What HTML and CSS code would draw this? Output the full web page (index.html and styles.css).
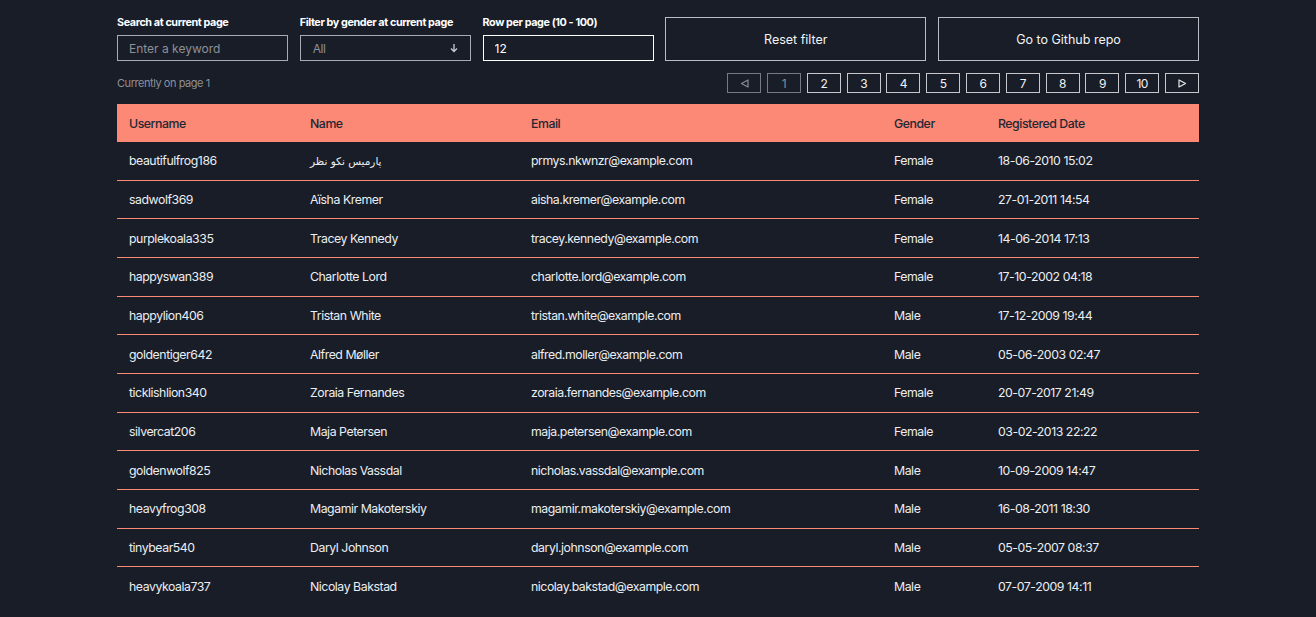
FILE: index.html
```html
<!DOCTYPE html>
<html lang="en">
<head>
<meta charset="utf-8">
<title>User table</title>
<link rel="stylesheet" href="styles.css">
</head>
<body>
<main class="page">
  <section class="controls">
    <label class="field">
      <span class="field-label">Search at current page</span>
      <input class="box" type="text" placeholder="Enter a keyword">
    </label>
    <label class="field">
      <span class="field-label">Filter by gender at current page</span>
      <span class="box select">
        <span class="select-value">All</span>
        <svg class="select-arrow" width="8" height="10" viewBox="0 0 8 10"><path d="M4 1v7.5M1 5.5l3 3 3-3" fill="none" stroke="#c9cbd1" stroke-width="1.3"/></svg>
      </span>
    </label>
    <label class="field">
      <span class="field-label">Row per page (10 - 100)</span>
      <input class="box box-active" type="text" value="12">
    </label>
    <button class="btn">Reset filter</button>
    <button class="btn">Go to Github repo</button>
  </section>

  <section class="pager-row">
    <span class="page-info">Currently on page 1</span>
    <nav class="pager">
      <span class="pg pg-off"><svg width="9" height="9" viewBox="0 0 9 9"><path d="M8 1v7L1.5 4.5z" fill="none" stroke="#8a8d95" stroke-width="1.2" stroke-linejoin="round"/></svg></span>
      <span class="pg pg-off">1</span>
      <span class="pg">2</span>
      <span class="pg">3</span>
      <span class="pg">4</span>
      <span class="pg">5</span>
      <span class="pg">6</span>
      <span class="pg">7</span>
      <span class="pg">8</span>
      <span class="pg">9</span>
      <span class="pg">10</span>
      <span class="pg"><svg width="9" height="9" viewBox="0 0 9 9"><path d="M1 1v7l6.5-3.5z" fill="none" stroke="#e6e7ea" stroke-width="1.2" stroke-linejoin="round"/></svg></span>
    </nav>
  </section>

  <table class="users">
    <colgroup>
      <col class="c1"><col class="c2"><col class="c3"><col class="c4"><col class="c5">
    </colgroup>
    <thead>
      <tr><th>Username</th><th>Name</th><th>Email</th><th>Gender</th><th>Registered Date</th></tr>
    </thead>
    <tbody>
      <tr><td>beautifulfrog186</td><td class="rtl"><span dir="rtl">پارمیس نکو نظر</span></td><td>prmys.nkwnzr@example.com</td><td>Female</td><td>18-06-2010 15:02</td></tr>
      <tr><td>sadwolf369</td><td>Aïsha Kremer</td><td>aisha.kremer@example.com</td><td>Female</td><td>27-01-2011 14:54</td></tr>
      <tr><td>purplekoala335</td><td>Tracey Kennedy</td><td>tracey.kennedy@example.com</td><td>Female</td><td>14-06-2014 17:13</td></tr>
      <tr><td>happyswan389</td><td>Charlotte Lord</td><td>charlotte.lord@example.com</td><td>Female</td><td>17-10-2002 04:18</td></tr>
      <tr><td>happylion406</td><td>Tristan White</td><td>tristan.white@example.com</td><td>Male</td><td>17-12-2009 19:44</td></tr>
      <tr><td>goldentiger642</td><td>Alfred Møller</td><td>alfred.moller@example.com</td><td>Male</td><td>05-06-2003 02:47</td></tr>
      <tr><td>ticklishlion340</td><td>Zoraia Fernandes</td><td>zoraia.fernandes@example.com</td><td>Female</td><td>20-07-2017 21:49</td></tr>
      <tr><td>silvercat206</td><td>Maja Petersen</td><td>maja.petersen@example.com</td><td>Female</td><td>03-02-2013 22:22</td></tr>
      <tr><td>goldenwolf825</td><td>Nicholas Vassdal</td><td>nicholas.vassdal@example.com</td><td>Male</td><td>10-09-2009 14:47</td></tr>
      <tr><td>heavyfrog308</td><td>Magamir Makoterskiy</td><td>magamir.makoterskiy@example.com</td><td>Male</td><td>16-08-2011 18:30</td></tr>
      <tr><td>tinybear540</td><td>Daryl Johnson</td><td>daryl.johnson@example.com</td><td>Male</td><td>05-05-2007 08:37</td></tr>
      <tr><td>heavykoala737</td><td>Nicolay Bakstad</td><td>nicolay.bakstad@example.com</td><td>Male</td><td>07-07-2009 14:11</td></tr>
    </tbody>
  </table>
</main>
</body>
</html>
```

FILE: styles.css
```css
* { box-sizing: border-box; }

html, body {
  margin: 0;
  padding: 0;
  background: #181d27;
  color: #eceef2;
  font-family: Inter, "Noto Sans", "DejaVu Sans", sans-serif;
  font-size: 12.3px;
  letter-spacing: -0.45px;
}

.page {
  width: 1082px;
  margin: 0 auto;
  padding-top: 16px;
}

.controls {
  display: flex;
  gap: 11.75px;
  align-items: flex-end;
}

.field {
  width: 171px;
  flex: none;
  display: flex;
  flex-direction: column;
  gap: 5px;
}

.field-label {
  font-size: 10.8px;
  font-weight: 700;
  line-height: 14px;
  color: #ffffff;
  white-space: nowrap;
  letter-spacing: -0.4px;
}

.box {
  height: 26px;
  width: 100%;
  border: 1px solid #a8abb2;
  background: #181d27;
  color: #ffffff;
  font: inherit;
  font-size: 12px;
  padding: 0 11px;
  outline: none;
  margin: 0;
  border-radius: 0;
}

.box::placeholder { color: #8d9098; }

.box-active { border-color: #ffffff; }

.select {
  display: flex;
  align-items: center;
  justify-content: space-between;
  padding: 0 12px;
}

.select-value { color: #8d9098; }

.select-arrow { display: block; }

.btn {
  flex: 1 1 0;
  height: 44px;
  border: 1px solid #b9bcc2;
  background: #181d27;
  color: #f2f3f5;
  font: inherit;
  font-size: 12.5px;
  cursor: pointer;
  border-radius: 0;
}

.pager-row {
  display: flex;
  justify-content: space-between;
  align-items: center;
  margin-top: 12px;
  height: 20px;
}

.page-info {
  font-size: 11px;
  color: #8d9098;
}

.pager {
  display: flex;
  gap: 5.8px;
}

.pg {
  width: 34px;
  height: 20px;
  border: 1px solid #c6c8cd;
  display: flex;
  align-items: center;
  justify-content: center;
  font-size: 12px;
  color: #f2f3f5;
}

.pg-off {
  border-color: #777a82;
  color: #8a8d95;
}

.users {
  width: 100%;
  margin-top: 11px;
  border-collapse: separate;
  border-spacing: 0;
  table-layout: fixed;
}

.c1 { width: 181px; }
.c2 { width: 221px; }
.c3 { width: 363px; }
.c4 { width: 104px; }
.c5 { width: 213px; }

.users th {
  background: #fc8876;
  color: #232733;
  font-weight: 500;
  text-align: left;
  height: 38px;
  padding: 0 12px;
}

.users td {
  height: 38.67px;
  padding: 0 12px;
  text-align: left;
  white-space: nowrap;
  color: #eceef2;
  border-bottom: 1px solid #fc8876;
}

.users tbody tr:last-child td { border-bottom: none; }

.users td.rtl span {
  font-family: "DejaVu Sans", "Noto Sans", sans-serif;
  font-size: 10.5px;
  letter-spacing: 0;
}
```
